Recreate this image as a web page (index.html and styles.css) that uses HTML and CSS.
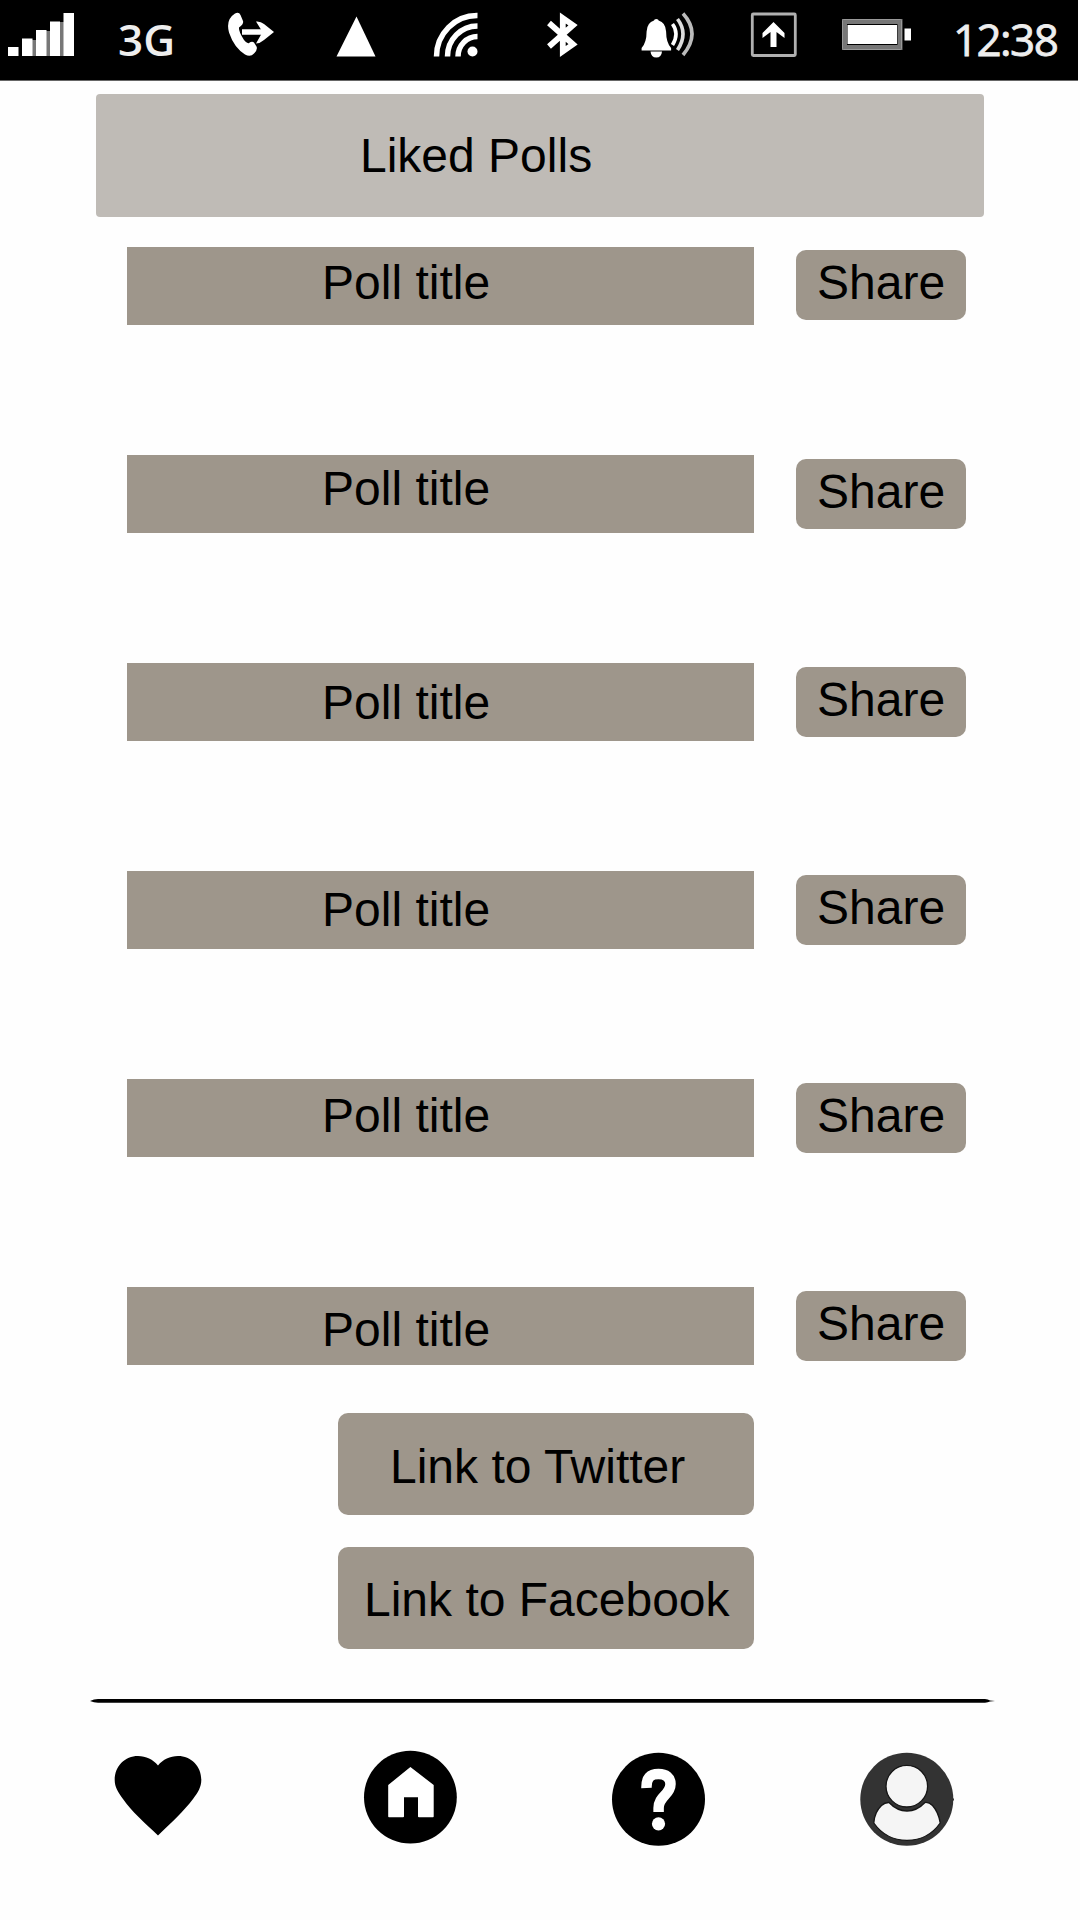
FILE: index.html
```html
<!DOCTYPE html>
<html lang="en">
<head>
<meta charset="utf-8">
<title>Liked Polls</title>
<link rel="stylesheet" href="styles.css">
</head>
<body>
<header class="status">
  <svg width="90" height="80" viewBox="0 0 90 80"><path fill="#777" d="M46 31h4v25h-4zM60 22h4v34h-4zM32 40h4v16h-4z"/><path fill="#fff" d="M8 47h10.500v9H8zM22 38.500h10.500V56H22zM36 30h10.500v26H36zM50 21.500h10V56H50zM63.500 13H74v43H63.500z"/></svg>
  <span class="network">3G</span>
  <svg width="100" height="80" viewBox="200 0 100 80"><path fill="#fff" d="M235 13.500q4-2 5.500 1.500l2.500 6q1 3-4 6.500q-.5 4 5 12.500q3 4 5 3q3-2 5-.5l2.500 4q1.500 3-2.500 7q-3.500 4-9 1q-11-7-16-22q-3.500-13 6-19z"/><path fill="none" stroke="#fff" stroke-width="5.500" d="M242 32h28"/><path fill="#fff" d="M256 21.500q4.500-.5 8 2.500l10 8-10 8q-4 3.500-8 3.500l6.500-11.500z"/></svg>
  <svg width="100" height="80" viewBox="300 0 100 80"><path fill="#fff" d="M356.500 16.500L375.500 56.500H336.500z"/></svg>
  <svg width="100" height="80" viewBox="400 0 100 80"><g fill="none" stroke="#fff" stroke-width="5.500"><path d="M436.500 56.500A40.500 41 0 0 1 477.500 15.500M447.500 56.500A30 30.500 0 0 1 477.500 26M458 56.500A19.500 20 0 0 1 477.500 36.500"/></g><circle cx="472.500" cy="51.500" r="5" fill="#fff"/></svg>
  <svg width="100" height="80" viewBox="500 0 100 80"><path fill="none" stroke="#fff" stroke-width="5.800" d="M549 23L573 44.300L562.800 51.500V18L573 25.200L549 46.500"/></svg>
  <svg width="120" height="80" viewBox="600 0 120 80"><path fill="#fff" d="M654 20.500q0-1.500 2.300-1.500t2.300 1.500q7 2 7.500 11q0 11 5 16.500v2.500h-29.500V48q5-5.500 5-16.500q.5-9 7.400-11zM650.500 51.500h11.500q-.5 6-5.700 6t-5.800-6z"/><g fill="none" stroke="#fff" stroke-width="3.600"><path d="M672.500 24q7 9.500 0 21"/><path d="M677.500 19q11 14.500 0 31" stroke="#ddd"/><path d="M683 13.500q18 20 0 41.500" stroke="#bbb"/></g></svg>
  <svg width="100" height="80" viewBox="720 0 100 80"><rect x="752.300" y="14" width="43" height="41.500" rx="1" fill="none" stroke="#b0b0b0" stroke-width="2.800"/><path fill="#fff" d="M773.500 22L784.500 33V38L776.500 32V47H770.500V32L762.500 38V33z"/></svg>
  <svg width="110" height="80" viewBox="820 0 110 80"><rect x="844.500" y="21.500" width="55.500" height="26" fill="none" stroke="#777" stroke-width="5"/><rect x="842.500" y="19.500" width="59" height="30" rx="1" fill="none" stroke="#999" stroke-width="1"/><path fill="#fff" d="M847.500 25h49.500v19h-49.500zM904.500 28.500h6.500v12h-6.500z"/></svg>
  <span class="clock">12:38</span>
</header>

<main class="content">
  <h1 class="heading">Liked Polls</h1>
  <ul class="polls">
    <li class="poll"><div class="poll-title t1">Poll title</div><button class="share first">Share</button></li>
    <li class="poll"><div class="poll-title t2">Poll title</div><button class="share">Share</button></li>
    <li class="poll"><div class="poll-title t3">Poll title</div><button class="share">Share</button></li>
    <li class="poll"><div class="poll-title t4">Poll title</div><button class="share">Share</button></li>
    <li class="poll"><div class="poll-title t5">Poll title</div><button class="share">Share</button></li>
    <li class="poll"><div class="poll-title t6">Poll title</div><button class="share">Share</button></li>
  </ul>
  <div class="links">
    <button class="link twitter">Link to Twitter</button>
    <button class="link facebook">Link to Facebook</button>
  </div>
</main>

<footer>
  <svg class="divider" width="907" height="4" viewBox="0 0 907 4"><path d="M1 2Q5 0 9 0H896Q899 .5 901 1.400L906 2L901 2.600Q899 3.700 896 3.800H9Q5 3.800 1 2z"/></svg>
  <nav class="tabs">
    <svg width="96" height="96" viewBox="110 1750 96 96"><path d="M158 1835.500C144 1822 132 1812 123 1799C118 1792 114.700 1787 114.700 1780C114.700 1766 125 1756 138 1756C146 1756 153 1759.500 158 1765.500C163 1759.500 170 1756 178 1756C191 1756 201.300 1766 201.300 1780C201.300 1787 198 1792.500 193 1799C184 1811 172 1822 158 1835.500z"/></svg>
    <svg width="96" height="96" viewBox="362 1750 96 96"><circle cx="410.400" cy="1797.200" r="46.400"/><path fill="#fff" d="M410.400 1767L433.700 1785V1816.500Q433.700 1817.300 433 1817.300H419Q418 1817.300 418 1816.500V1797.300H404V1816.500Q404 1817.300 403 1817.300H389Q388.200 1817.300 388.200 1816.500V1785z"/></svg>
    <svg width="96" height="96" viewBox="610 1750 96 96"><circle cx="658.500" cy="1799.300" r="46.500"/><path fill="none" stroke="#fff" stroke-width="10.500" d="M646.500 1788C646.200 1778 650 1774 658.500 1774C666 1774 670.500 1777.500 670.500 1784C670.500 1795 658.600 1796 658.600 1808V1812"/><circle cx="658.500" cy="1823.800" r="6.600" fill="#fff"/></svg>
    <svg width="96" height="96" viewBox="858 1750 96 96"><circle cx="906.800" cy="1799.300" r="46.500" fill="#333"/><path fill="#333" d="M952 1797l2.500 2.500-2.500 2.500z"/><g fill="#f5f5f5" stroke="#151515" stroke-width="1.300"><circle cx="906.800" cy="1786.200" r="20.800"/><path d="M889 1802.500Q897 1811 907 1811Q917 1811 925 1802.500Q929 1802 932.500 1805.500Q938.500 1812 940.200 1823Q928 1840.300 907 1840.300Q886 1840.300 873.800 1823Q874.500 1812 881.500 1805.500Q885 1802.300 889 1802.500z"/></g></svg>
  </nav>
</footer>
</body>
</html>
```
FILE: styles.css
```css
* {
  box-sizing: border-box;
}

body {
  margin: 0;
  width: 1080px;
  height: 1920px;
  overflow: hidden;
  background: #fefefe;
  color: #000;
  font: 48px/53px "Liberation Sans", Arial, sans-serif;
}

svg {
  display: block;
  flex: none;
}

.status {
  display: flex;
  width: 1078px;
  height: 81px;
  background: #000;
  border-bottom: 1px solid #666;
  color: #eee;
  font-family: "Open Sans", "Noto Sans", sans-serif;
  font-size: 44px;
  line-height: 60px;
  white-space: nowrap;
}

.network {
  width: 110px;
  padding: 9px 0 0 28px;
  font-weight: 600;
}

.clock {
  width: 148px;
  padding: 9px 0 0 23px;
  letter-spacing: -1.6px;
  -webkit-text-stroke: 0.8px #eee;
}

.content {
  padding-top: 13px;
}

.heading {
  width: 888px;
  height: 123px;
  margin: 0 0 30px 96px;
  padding: 35px 0 0 264px;
  border-radius: 4px;
  background: #bfbbb6;
  font-size: inherit;
  font-weight: 400;
}

.polls {
  display: flex;
  flex-direction: column;
  gap: 130px;
  margin: 0;
  padding: 0 0 0 127px;
  list-style: none;
}

.poll {
  display: flex;
  gap: 42px;
  height: 78px;
}

.poll-title {
  width: 627px;
  padding-left: 195px;
  background: #9e968b;
}

.t1 { padding-top: 9px; }
.t2 { padding-top: 7px; }
.t3 { padding-top: 13px; }
.t4 { padding-top: 12px; }
.t5 { padding-top: 10px; }
.t6 { padding-top: 16px; }

.share,
.link {
  display: flex;
  align-items: flex-start;
  border: 0;
  border-radius: 10px;
  background: #9e968b;
  color: inherit;
  font: inherit;
  white-space: nowrap;
}

.share {
  width: 170px;
  height: 70px;
  margin: 4px 0 0;
  padding: 6px 0 0 21px;
}

.share.first {
  margin-top: 3px;
}

.links {
  display: flex;
  flex-direction: column;
  gap: 32px;
  padding: 48px 0 0 338px;
}

.link {
  width: 416px;
  height: 102px;
}

.twitter {
  padding: 27px 0 0 52px;
}

.facebook {
  padding: 26px 0 0 26px;
}

.divider {
  margin: 50px 0 0 89px;
}

.tabs {
  display: flex;
  gap: 152px;
  padding: 47px 0 0 110px;
}

.tabs svg:first-child {
  margin-right: 4px;
}
```
